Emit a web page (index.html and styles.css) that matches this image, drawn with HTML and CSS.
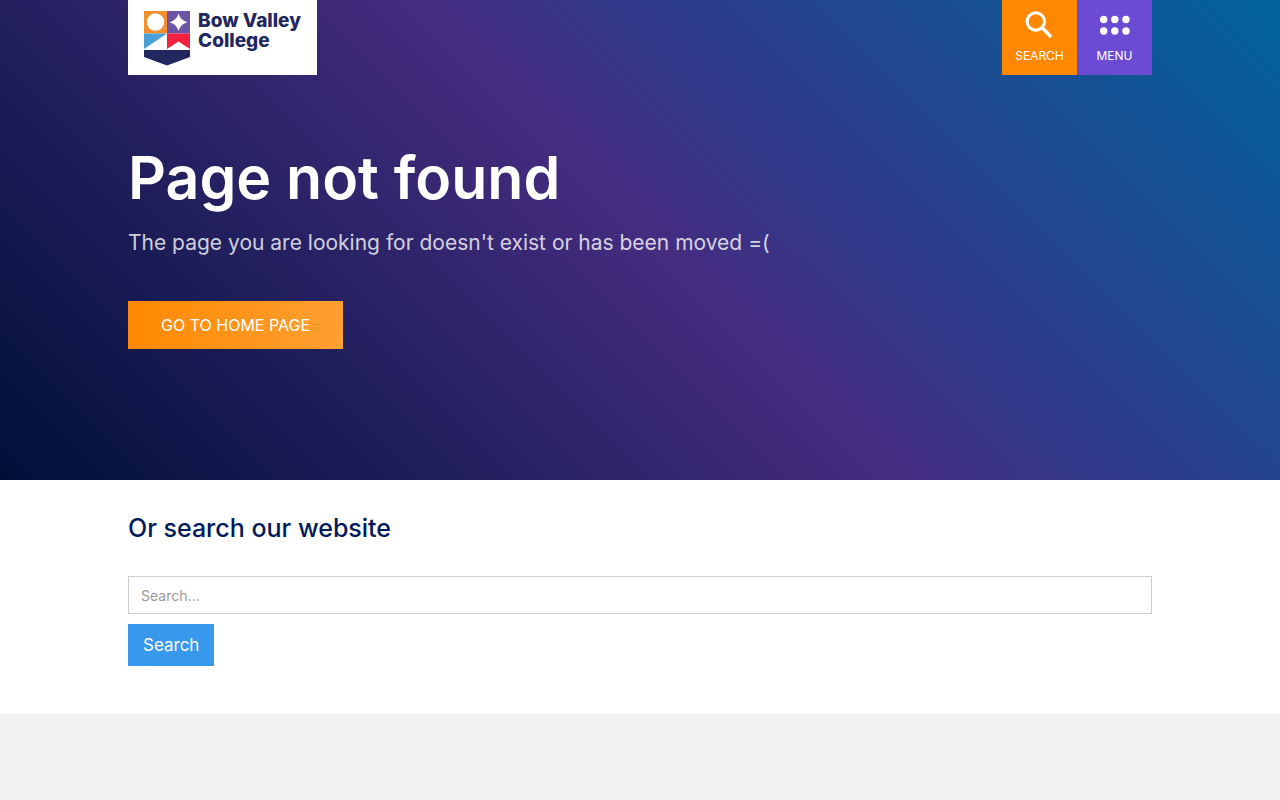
FILE: index.html
```
<!DOCTYPE html>
<html lang="en">
<head>
    <meta charset="UTF-8">
    <meta name="viewport" content="width=device-width, initial-scale=1.0">
    <title>Page not found | Bow Valley College</title>
    <link rel="stylesheet" href="styles.css">
</head>
<body>
    <div class="hero">
        <header class="container header">
            <a href="/" class="logo">
                <svg class="logo-shield" width="46" height="55" viewBox="0 0 46 55" aria-hidden="true">
                    <path fill="#f58d2d" d="M0 0h23v22.500H0z"/>
                    <path fill="#6c55a6" d="M23 0h23v22.500H23z"/>
                    <path fill="#4b9fd8" d="M0 22.500h23L0 38z"/>
                    <path fill="#f31f3f" d="M23 22.500h23V38L34.500 30.500 23 38z"/>
                    <path fill="#23275f" d="M0 39h46v7L23 54.500 0 46z"/>
                    <circle fill="#fff" cx="11.500" cy="11" r="8.700"/>
                    <path fill="#fff" d="M34.500 2.500Q36.500 9.300 43.500 11.200 36.500 13 34.500 20 32.500 13 25.500 11.200 32.500 9.300 34.500 2.500z"/>
                </svg>
                <span class="logo-text">Bow Valley<br>College</span>
            </a>
            <nav class="header-nav">
                <button type="button" class="nav-btn nav-search">
                    <svg width="30" height="30" viewBox="0 0 30 30" fill="none" stroke="#fff" aria-hidden="true">
                        <circle cx="10.800" cy="11.500" r="8.700" stroke-width="3"/>
                        <path d="M17 17.500L26.200 27" stroke-width="3.600"/>
                    </svg>
                    <span>SEARCH</span>
                </button>
                <button type="button" class="nav-btn nav-menu">
                    <svg width="30" height="30" viewBox="0 0 30 30" fill="#fff" aria-hidden="true">
                        <circle cx="3.700" cy="9.500" r="3.700"/>
                        <circle cx="14.800" cy="9.500" r="3.700"/>
                        <circle cx="26" cy="9.500" r="3.700"/>
                        <circle cx="3.700" cy="21" r="3.700"/>
                        <circle cx="14.800" cy="21" r="3.700"/>
                        <circle cx="26" cy="21" r="3.700"/>
                    </svg>
                    <span>MENU</span>
                </button>
            </nav>
        </header>
        <div class="container hero-content">
            <h1>Page not found</h1>
            <p>The page you are looking for doesn't exist or has been moved =(</p>
            <a href="/" class="btn-home">GO TO HOME PAGE</a>
        </div>
    </div>

    <main class="search-section">
        <form class="container" action="/search">
            <h2><label for="search">Or search our website</label></h2>
            <input type="search" id="search" name="query" placeholder="Search…">
            <button type="submit" class="btn-search">Search</button>
        </form>
    </main>
</body>
</html>
```
FILE: styles.css
```
* {
    box-sizing: border-box;
}

body {
    margin: 0;
    background: #f1f1f1;
    font-family: Inter, sans-serif;
    font-size: 16px;
}

.container {
    width: 80%;
    margin: 0 auto;
}

.hero {
    min-height: 60vh;
    background: linear-gradient(45deg, #000f38, #211f5d 26%, #452c80 51%, #323889 62%, #00639b);
    color: #fff;
}

.header {
    display: flex;
    justify-content: space-between;
    align-items: flex-start;
}

.logo {
    display: flex;
    gap: 8px;
    height: 75px;
    padding: 11px 16px 0;
    background: #fff;
    color: #23275f;
    text-decoration: none;
}

.logo-text {
    font-size: 19px;
    font-weight: 800;
    line-height: 20px;
}

.header-nav {
    display: flex;
}

.nav-btn {
    display: flex;
    flex-direction: column;
    align-items: center;
    gap: 8px;
    width: 75px;
    height: 75px;
    padding: 10px 0 0;
    border: none;
    color: #fff;
    font-family: inherit;
    font-size: 12px;
    line-height: 16px;
    cursor: pointer;
}

.nav-search {
    background: #ff8800;
}

.nav-menu {
    background: #6c4bd4;
}

.hero-content {
    padding: 67px 0 40px;
}

h1 {
    margin: 0;
    font-size: 59px;
    font-weight: 600;
    line-height: 72px;
}

.hero-content p {
    margin: 13px 0 42px;
    color: rgba(255, 255, 255, 0.8);
    font-size: 21px;
    line-height: 32px;
}

.btn-home {
    display: inline-block;
    padding: 12px 33px;
    background: linear-gradient(90deg, #ff8800, #ffa033);
    color: #fff;
    line-height: 24px;
    text-decoration: none;
}

.search-section {
    padding: 32px 0 48px;
    background: #fff;
}

h2 {
    margin: 0 0 32px;
    color: #001a5c;
    font-size: 25px;
    font-weight: 500;
    line-height: 32px;
}

input[type="search"] {
    display: block;
    width: 100%;
    height: 38px;
    margin-bottom: 10px;
    padding: 8px 12px;
    border: 1px solid #ccc;
    border-radius: 0;
    font-family: inherit;
    font-size: 14px;
    appearance: none;
}

input[type="search"]::placeholder {
    color: #999;
}

.btn-search {
    padding: 9px 15px;
    border: none;
    background: #3898ec;
    color: #fff;
    font-family: inherit;
    font-size: 17px;
    line-height: 24px;
    cursor: pointer;
}
```
